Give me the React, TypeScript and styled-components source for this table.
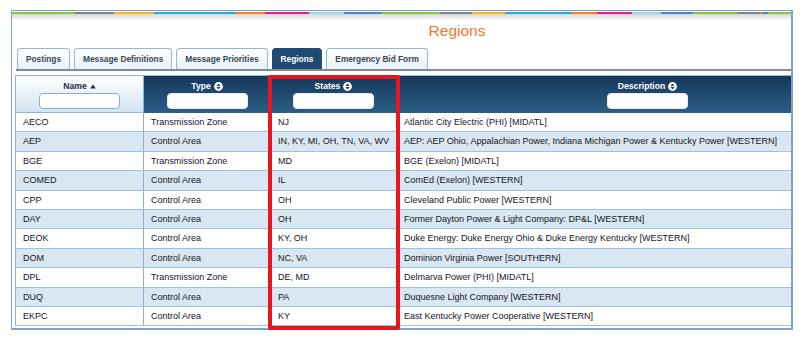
import React from "react";
import styled, { createGlobalStyle } from "styled-components";

const GlobalStyle = createGlobalStyle`
  html, body { margin: 0; padding: 0; background: #ffffff; }
  body { font-family: "Liberation Sans", Arial, sans-serif; }
`;

const Page = styled.div`
  position: relative;
  width: 800px;
  height: 339px;
  overflow: hidden;
  padding: 10px 0 0 11px;
  box-sizing: border-box;
`;

const Frame = styled.div`
  width: 782px;
  box-sizing: border-box;
  border: 1px solid #7f9fcc;
  border-right-width: 2px;
  border-bottom-width: 2px;
  padding: 1px 0 2px 0;
  background: #ffffff;
`;

const Stripe = styled.div`
  height: 2px;
  background: linear-gradient(
    to right,
    #8cc63f 0 63px,
    #808285 63px 102px,
    #fbb817 102px 142px,
    #29a9e1 142px 224px,
    #f58220 224px 253px,
    #ec1c8d 253px 297px,
    #9fd4ec 297px 332px,
    #4f86c6 332px 370px,
    #8cc63f 370px 428px,
    #808285 428px 460px,
    #fbb817 460px 493px,
    #29a9e1 493px 560px,
    #f58220 560px 585px,
    #ec1c8d 585px 620px,
    #9fd4ec 620px 649px,
    #4f86c6 649px 681px,
    #8cc63f 681px 725px,
    #808285 725px 748px,
    #f58220 748px 750px,
    #4f86c6 750px 756px,
    #8cc63f 756px 100%
  );
`;

const Title = styled.h1`
  margin: 0;
  height: 34px;
  line-height: 34px;
  padding-left: 111px;
  text-align: center;
  font-family: "Liberation Sans", Arial, sans-serif;
  font-weight: normal;
  font-size: 15.5px;
  color: #f2772a;
  background: linear-gradient(to bottom, rgba(60, 60, 60, 0.2), rgba(60, 60, 60, 0) 7px);
`;

const TabBar = styled.div`
  display: flex;
  gap: 4px;
  margin-left: 4px;
  padding-left: 1px;
  border-bottom: 2px solid #7f8c9c;
`;

const Tab = styled.div<{ $active?: boolean }>`
  height: 21px;
  box-sizing: border-box;
  padding: 0 8px;
  border: 1px solid ${(p) => (p.$active ? "#1f4b72" : "#93b6d6")};
  border-bottom: 0;
  border-radius: 4px 4px 0 0;
  background: ${(p) =>
    p.$active ? "#1f4b72" : "linear-gradient(to bottom, #ffffff, #e8f1f8)"};
  color: ${(p) => (p.$active ? "#ffffff" : "#36465a")};
  font-weight: bold;
  font-size: 8.3px;
  line-height: 20px;
  white-space: nowrap;
`;

const TableWrap = styled.div`
  margin: 4px 0 0 3px;
  border-left: 1px solid #8fb4d4;
  border-top: 1px solid #8fb4d4;
  overflow: hidden;
`;

const Row = styled.div<{ $alt?: boolean }>`
  display: grid;
  grid-template-columns: 128px 127px 126px 502px;
  height: 19.4px;
  box-sizing: border-box;
  border-bottom: 1px solid #9ec2de;
  background: ${(p) => (p.$alt ? "#d8e7f1" : "#ffffff")};
`;

const HeaderRow = styled.div`
  display: grid;
  grid-template-columns: 128px 127px 126px 502px;
  height: 37px;
`;

const HeaderCell = styled.div<{ $light?: boolean }>`
  display: flex;
  flex-direction: column;
  align-items: center;
  box-sizing: border-box;
  padding-top: 5px;
  border-right: 1px solid ${(p) => (p.$light ? "#8fb4d4" : "#22486b")};
  border-bottom: ${(p) => (p.$light ? "1px solid #8fb4d4" : "0")};
  background: ${(p) =>
    p.$light
      ? "linear-gradient(to bottom, #ffffff, #d3e5f2)"
      : "linear-gradient(to bottom, #16385b, #2c5d86)"};
  color: ${(p) => (p.$light ? "#1f2d3d" : "#ffffff")};
`;

const HeaderLabel = styled.div`
  display: flex;
  align-items: center;
  gap: 3px;
  height: 11px;
  font-weight: bold;
  font-size: 8.6px;
  line-height: 11px;
`;

const FilterInput = styled.input<{ $light?: boolean }>`
  display: block;
  width: 81px;
  height: 16px;
  margin: 1px 0 0 0;
  padding: 0;
  box-sizing: border-box;
  border: 1px solid ${(p) => (p.$light ? "#86acd0" : "#e4edf5")};
  border-radius: 4px;
  background: #ffffff;
  outline: none;
`;

const Cell = styled.div`
  box-sizing: border-box;
  padding-left: 7px;
  border-right: 1px solid #8ab0d0;
  font-size: 9px;
  line-height: 18.4px;
  color: #141428;
  white-space: nowrap;
  overflow: hidden;
`;

const Highlight = styled.div`
  position: absolute;
  left: 268px;
  top: 75px;
  width: 132px;
  height: 255px;
  box-sizing: border-box;
  border: 4px solid #e5161d;
  border-radius: 2px;
  pointer-events: none;
`;

const SortAsc = () => (
  <svg width="6" height="5" viewBox="0 0 6 5">
    <polygon points="3,0.5 5.8,4.5 0.2,4.5" fill="#1f2d3d" />
  </svg>
);

const SortBoth = () => (
  <svg width="9" height="9" viewBox="0 0 9 9">
    <circle cx="4.5" cy="4.5" r="4.4" fill="#ffffff" />
    <polygon points="4.5,1.6 6.6,3.9 2.4,3.9" fill="#1d4166" />
    <polygon points="2.4,5.1 6.6,5.1 4.5,7.4" fill="#1d4166" />
  </svg>
);

type Region = { name: string; type: string; states: string; desc: string };

const regions: Region[] = [
  { name: "AECO", type: "Transmission Zone", states: "NJ", desc: "Atlantic City Electric (PHI) [MIDATL]" },
  {
    name: "AEP",
    type: "Control Area",
    states: "IN, KY, MI, OH, TN, VA, WV",
    desc: "AEP: AEP Ohio, Appalachian Power, Indiana Michigan Power & Kentucky Power [WESTERN]",
  },
  { name: "BGE", type: "Transmission Zone", states: "MD", desc: "BGE (Exelon) [MIDATL]" },
  { name: "COMED", type: "Control Area", states: "IL", desc: "ComEd (Exelon) [WESTERN]" },
  { name: "CPP", type: "Control Area", states: "OH", desc: "Cleveland Public Power [WESTERN]" },
  { name: "DAY", type: "Control Area", states: "OH", desc: "Former Dayton Power & Light Company: DP&L [WESTERN]" },
  {
    name: "DEOK",
    type: "Control Area",
    states: "KY, OH",
    desc: "Duke Energy: Duke Energy Ohio & Duke Energy Kentucky [WESTERN]",
  },
  { name: "DOM", type: "Control Area", states: "NC, VA", desc: "Dominion Virginia Power [SOUTHERN]" },
  { name: "DPL", type: "Transmission Zone", states: "DE, MD", desc: "Delmarva Power (PHI) [MIDATL]" },
  { name: "DUQ", type: "Control Area", states: "PA", desc: "Duquesne Light Company [WESTERN]" },
  { name: "EKPC", type: "Control Area", states: "KY", desc: "East Kentucky Power Cooperative [WESTERN]" },
];

const tabs = ["Postings", "Message Definitions", "Message Priorities", "Regions", "Emergency Bid Form"];

export default function App() {
  return (
    <Page>
      <GlobalStyle />
      <Frame>
        <Stripe />
        <Title>Regions</Title>
        <TabBar>
          {tabs.map((t) => (
            <Tab key={t} $active={t === "Regions"}>
              {t}
            </Tab>
          ))}
        </TabBar>
        <TableWrap>
          <HeaderRow>
            <HeaderCell $light>
              <HeaderLabel>
                Name <SortAsc />
              </HeaderLabel>
              <FilterInput $light />
            </HeaderCell>
            <HeaderCell>
              <HeaderLabel>
                Type <SortBoth />
              </HeaderLabel>
              <FilterInput />
            </HeaderCell>
            <HeaderCell>
              <HeaderLabel>
                States <SortBoth />
              </HeaderLabel>
              <FilterInput />
            </HeaderCell>
            <HeaderCell>
              <HeaderLabel>
                Description <SortBoth />
              </HeaderLabel>
              <FilterInput />
            </HeaderCell>
          </HeaderRow>
          {regions.map((r, i) => (
            <Row key={r.name} $alt={i % 2 === 1}>
              <Cell>{r.name}</Cell>
              <Cell>{r.type}</Cell>
              <Cell>{r.states}</Cell>
              <Cell>{r.desc}</Cell>
            </Row>
          ))}
        </TableWrap>
      </Frame>
      <Highlight />
    </Page>
  );
}
